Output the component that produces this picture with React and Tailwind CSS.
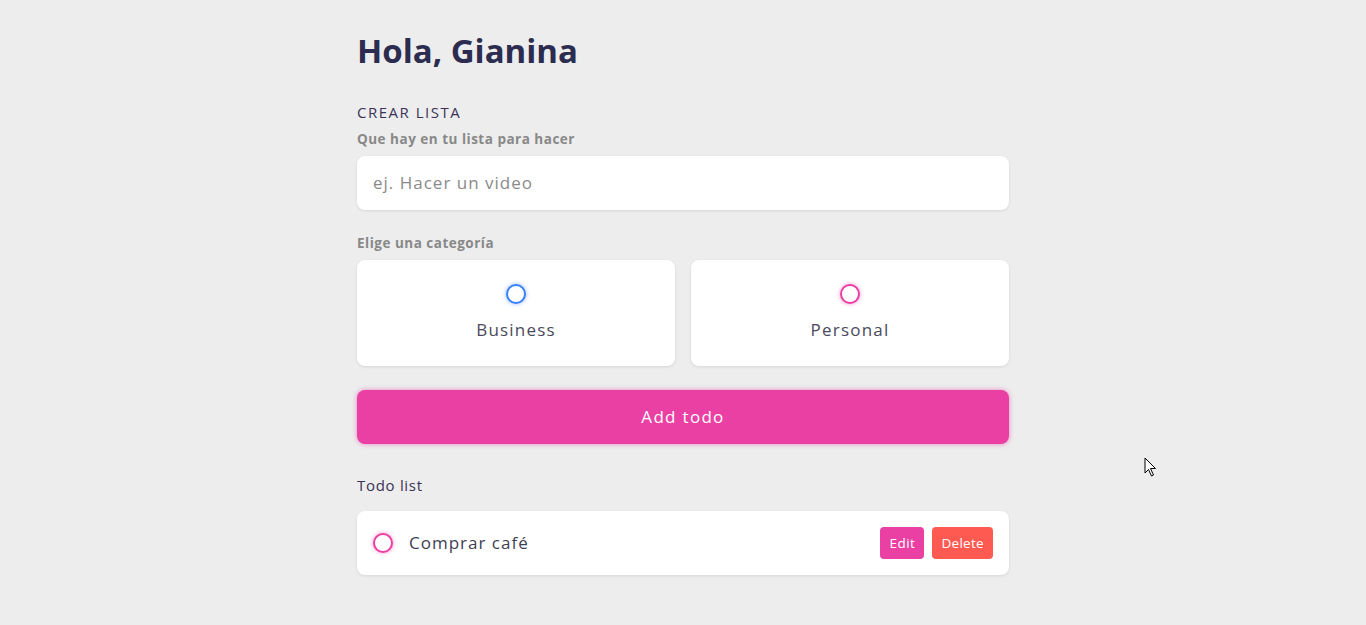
import React from "react";

const font = { fontFamily: '"Open Sans", "Liberation Sans", sans-serif' };

function Radio({ color }) {
  const cls =
    color === "blue"
      ? "border-[#3a82f6] shadow-[0_0_4px_rgba(58,130,246,0.55)]"
      : "border-[#ea40a4] shadow-[0_0_4px_rgba(234,64,164,0.55)]";
  return <span className={`block w-[20px] h-[20px] rounded-full border-2 bg-white ${cls}`} />;
}

export default function App() {
  return (
    <div className="relative min-h-[625px] bg-[#ededed]" style={font}>
      <div className="w-[652px] mx-auto pt-[29px] flex flex-col">
        <h1 className="text-[33px] leading-[44px] font-bold text-[#2b2c4f]">Hola, Gianina</h1>
        <div className="mt-[27px] text-[15px] leading-[24px] text-[#3a3356] uppercase tracking-[1.5px]">Crear lista</div>
        <div className="mt-[5px] text-[13.5px] leading-[20px] font-bold text-[#888888] tracking-[0.5px]">Que hay en tu lista para hacer</div>
        <div className="mt-[7px] h-[54px] bg-white rounded-lg shadow-[0_1px_3px_rgba(0,0,0,0.1)] flex items-center px-4">
          <span className="text-[17px] text-[#8a8a8a] tracking-[1px]">ej. Hacer un video</span>
        </div>
        <div className="mt-[23px] text-[13.5px] leading-[20px] font-bold text-[#888888] tracking-[0.5px]">Elige una categoría</div>
        <div className="mt-[7px] grid grid-cols-2 gap-4">
          {[
            ["blue", "Business"],
            ["pink", "Personal"],
          ].map(([c, l]) => (
            <div key={l} className="h-[106px] bg-white rounded-lg shadow-[0_1px_3px_rgba(0,0,0,0.1)] flex flex-col items-center pt-[24px]">
              <Radio color={c} />
              <span className="mt-[12px] text-[17px] leading-[28px] text-[#4a4a5c] tracking-[1.2px]">{l}</span>
            </div>
          ))}
        </div>
        <button className="mt-[24px] h-[54px] rounded-lg bg-[#ea40a4] text-white text-[17px] tracking-[1.3px] shadow-[0_0_5px_rgba(234,64,164,0.6)]">
          Add todo
        </button>
        <div className="mt-[29px] text-[15px] leading-[24px] text-[#3a3356] tracking-[0.7px]">Todo list</div>
        <div className="mt-[14px] h-[64px] bg-white rounded-lg shadow-[0_1px_3px_rgba(0,0,0,0.1)] flex items-center px-4">
          <Radio color="pink" />
          <span className="ml-4 text-[17px] text-[#3e3e52] tracking-[1px]">Comprar café</span>
          <div className="ml-auto flex gap-2">
            <button className="h-[32px] px-[9px] rounded bg-[#ea40a4] text-white text-[13.5px] tracking-[0.5px]">Edit</button>
            <button className="h-[32px] px-[9px] rounded bg-[#ff5a52] text-white text-[13.5px] tracking-[0.3px]">Delete</button>
          </div>
        </div>
      </div>
      <svg className="absolute left-[1144px] top-[457px]" width="14" height="20" viewBox="0 0 14 20">
        <path d="M1 1 L1 16 L4.5 12.5 L7.5 19 L9.5 18 L6.5 11.5 L11.5 11.5 Z" fill="white" stroke="black" strokeWidth="1" />
      </svg>
    </div>
  );
}
